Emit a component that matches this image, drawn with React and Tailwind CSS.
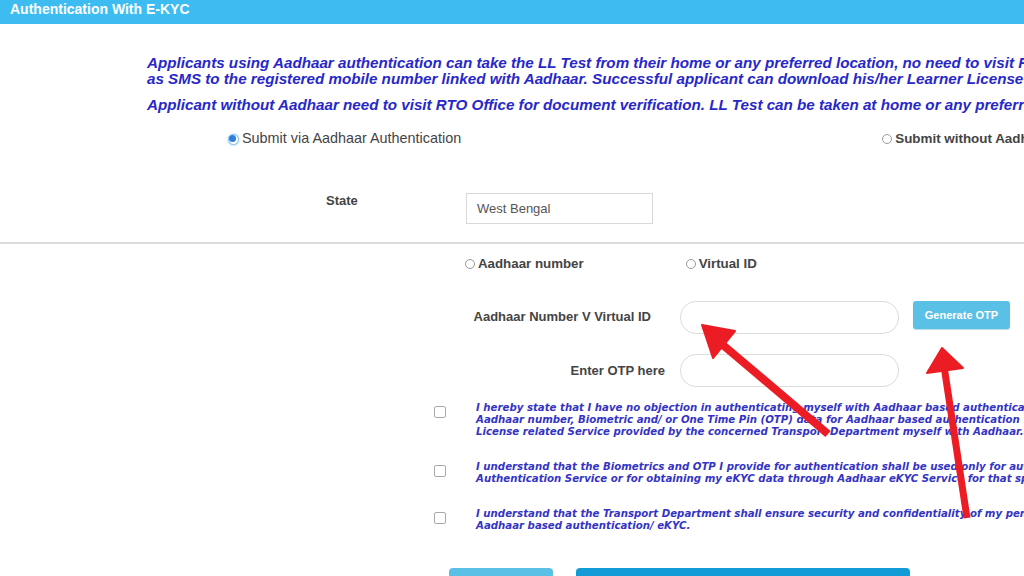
import React from "react";

function Radio({ checked }) {
  return checked ? (
    <span className="inline-block w-[11px] h-[11px] rounded-full border border-[#8ec5ef] bg-white flex items-center justify-center shadow-[0_0_2px_#7cbcf0]">
      <span className="block w-[7px] h-[7px] rounded-full bg-[#2f7fd8]" />
    </span>
  ) : (
    <span className="inline-block w-[10px] h-[10px] rounded-full border border-[#9a9a9a] bg-white" />
  );
}

function Check() {
  return <span className="block w-[12px] h-[12px] rounded-[2px] border border-[#a9a9a9] bg-white" />;
}

export default function App() {
  return (
    <div className="relative w-[1024px] h-[576px] overflow-hidden bg-white font-['Liberation_Sans',Arial,sans-serif]">
      <div className="h-[24px] bg-[#3dbcf2] pl-[10px] text-white font-bold text-[14px] leading-[19px]">
        Authentication With E-KYC
      </div>

      <div className="pl-[147px] pt-[30px] text-[#2828c8] font-bold italic text-[15.2px] whitespace-nowrap">
        <div className="leading-[17px]">
          Applicants using Aadhaar authentication can take the LL Test from their home or any preferred location, no need to visit RTO Office. LL will be sent
        </div>
        <div className="leading-[15px]">
          as SMS to the registered mobile number linked with Aadhaar. Successful applicant can download his/her Learner License from the website.
        </div>
        <div className="leading-[17px] mt-[10px]">
          Applicant without Aadhaar need to visit RTO Office for document verification. LL Test can be taken at home or any preferred location.
        </div>
      </div>

      <div className="flex items-center mt-[17px] text-[#444] whitespace-nowrap h-[18px]">
        <div className="flex items-center gap-[3px] ml-[228px] text-[14.4px]">
          <Radio checked />
          <span>Submit via Aadhaar Authentication</span>
        </div>
        <div className="flex items-center gap-[3px] ml-[421px] font-bold text-[13.4px]">
          <Radio />
          <span>Submit without Aadhaar Authentication</span>
        </div>
      </div>

      <div className="flex items-start mt-[45px] h-[31px]">
        <div className="ml-[326px] w-[140px] text-[13px] font-bold text-[#444] leading-[16px]">State</div>
        <div className="w-[187px] h-[31px] border border-[#d8d8d8] px-[10px] text-[13px] text-[#555] leading-[29px]">
          West Bengal
        </div>
      </div>

      <div className="mt-[18px] h-[2px] bg-[#dcdcdc]" />

      <div className="flex items-center mt-[12px] h-[16px] text-[13px] font-bold text-[#444] whitespace-nowrap">
        <div className="flex items-center gap-[3px] ml-[465px]">
          <Radio />
          <span className="text-[13.3px]">Aadhaar number</span>
        </div>
        <div className="flex items-center gap-[3px] ml-[102px]">
          <Radio />
          <span className="text-[13.3px]">Virtual ID</span>
        </div>
      </div>

      <div className="flex items-start mt-[29px] h-[33px]">
        <div className="w-[651px] text-right text-[13px] font-bold text-[#444] pt-[6px]">Aadhaar Number V Virtual ID</div>
        <div className="ml-[29px] w-[219px] h-[33px] rounded-[16px] border border-[#dcdcdc]" />
        <div className="ml-[14px] w-[97px] h-[28px] rounded-[3px] bg-[#5bc0e6] text-white text-[11px] font-bold flex items-center justify-center shadow-[0_1px_1px_#b8dcea]">
          Generate OTP
        </div>
      </div>

      <div className="flex items-center mt-[20px] h-[33px]">
        <div className="w-[665px] text-right text-[13px] font-bold text-[#444]">Enter OTP here</div>
        <div className="ml-[15px] w-[219px] h-[33px] rounded-[16px] border border-[#dcdcdc]" />
      </div>

      <div className="flex flex-col gap-[23px] mt-[15px] font-['DejaVu_Sans',Verdana,sans-serif] text-[10.2px] leading-[12px] italic font-bold text-[#3434c4] whitespace-nowrap">
        <div className="flex items-start">
          <div className="ml-[434px] w-[42px] shrink-0 pt-[4px]"><Check /></div>
          <div>
            <div>I hereby state that I have no objection in authenticating myself with Aadhaar based authentication system and consent to providing my</div>
            <div>Aadhaar number, Biometric and/ or One Time Pin (OTP) data for Aadhaar based authentication for the purposes of availing of Learner</div>
            <div>License related Service provided by the concerned Transport Department myself with Aadhaar.</div>
          </div>
        </div>
        <div className="flex items-start">
          <div className="ml-[434px] w-[42px] shrink-0 pt-[4px]"><Check /></div>
          <div>
            <div>I understand that the Biometrics and OTP I provide for authentication shall be used only for authenticating my identity through the Aadhaar</div>
            <div>Authentication Service or for obtaining my eKYC data through Aadhaar eKYC Service for that specific transaction.</div>
          </div>
        </div>
        <div className="flex items-start">
          <div className="ml-[434px] w-[42px] shrink-0 pt-[4px]"><Check /></div>
          <div>
            <div>I understand that the Transport Department shall ensure security and confidentiality of my personal identity data provided for the purpose of</div>
            <div>Aadhaar based authentication/ eKYC.</div>
          </div>
        </div>
      </div>

      <div className="flex mt-[36px]">
        <div className="ml-[449px] w-[104px] h-[30px] rounded-[4px] bg-[#5bc0e6]" />
        <div className="ml-[23px] w-[334px] h-[30px] rounded-[4px] bg-[#129bd6]" />
      </div>

      <svg className="absolute left-0 top-0 pointer-events-none" width="1024" height="576" viewBox="0 0 1024 576">
        <g fill="#ec1c24" stroke="#ec1c24" strokeLinejoin="round">
          <line x1="828" y1="434" x2="717" y2="340" strokeWidth="8" />
          <polygon points="702,325 735,331 713,358" strokeWidth="2" />
          <line x1="967" y1="518" x2="944" y2="366" strokeWidth="7" />
          <polygon points="942,348 927,373 963,368" strokeWidth="2" />
        </g>
      </svg>
    </div>
  );
}
